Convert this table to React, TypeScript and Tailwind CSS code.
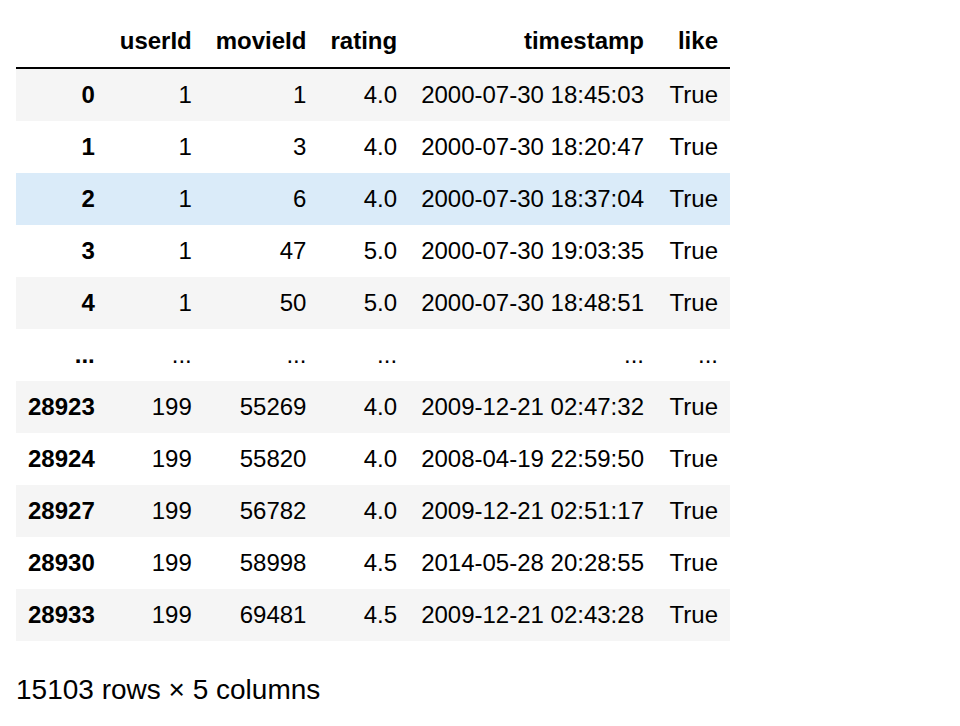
type Row = {
  idx: string;
  userId: string;
  movieId: string;
  rating: string;
  timestamp: string;
  like: string;
};

const rows: Row[] = [
  { idx: '0', userId: '1', movieId: '1', rating: '4.0', timestamp: '2000-07-30 18:45:03', like: 'True' },
  { idx: '1', userId: '1', movieId: '3', rating: '4.0', timestamp: '2000-07-30 18:20:47', like: 'True' },
  { idx: '2', userId: '1', movieId: '6', rating: '4.0', timestamp: '2000-07-30 18:37:04', like: 'True' },
  { idx: '3', userId: '1', movieId: '47', rating: '5.0', timestamp: '2000-07-30 19:03:35', like: 'True' },
  { idx: '4', userId: '1', movieId: '50', rating: '5.0', timestamp: '2000-07-30 18:48:51', like: 'True' },
  { idx: '...', userId: '...', movieId: '...', rating: '...', timestamp: '...', like: '...' },
  { idx: '28923', userId: '199', movieId: '55269', rating: '4.0', timestamp: '2009-12-21 02:47:32', like: 'True' },
  { idx: '28924', userId: '199', movieId: '55820', rating: '4.0', timestamp: '2008-04-19 22:59:50', like: 'True' },
  { idx: '28927', userId: '199', movieId: '56782', rating: '4.0', timestamp: '2009-12-21 02:51:17', like: 'True' },
  { idx: '28930', userId: '199', movieId: '58998', rating: '4.5', timestamp: '2014-05-28 20:28:55', like: 'True' },
  { idx: '28933', userId: '199', movieId: '69481', rating: '4.5', timestamp: '2009-12-21 02:43:28', like: 'True' },
];

const columns = ['userId', 'movieId', 'rating', 'timestamp', 'like'] as const;

export default function App() {
  return (
    <div className="min-h-screen bg-white pt-[15px] pl-4 text-black font-['Liberation_Sans',Arial,sans-serif]">
      <table className="border-collapse text-[24px] leading-[28px]">
        <thead>
          <tr className="border-b-2 border-black">
            <th className="px-3 py-3"></th>
            {columns.map((c) => (
              <th
                key={c}
                className={
                  c === 'userId'
                    ? 'w-[97px] px-3 py-3 text-right font-bold'
                    : c === 'like'
                      ? 'w-[74px] px-3 py-3 text-right font-bold'
                      : 'px-3 py-3 text-right font-bold'
                }
              >
                {c}
              </th>
            ))}
          </tr>
        </thead>
        <tbody>
          {rows.map((r, i) => {
            // row 2 is the one under the mouse
            const bg = i === 2 ? 'bg-[#daebf9]' : i % 2 === 0 ? 'bg-[#f5f5f5]' : 'bg-white';
            return (
              <tr key={r.idx + i} className={bg}>
                <th className="px-3 py-3 text-right font-bold">{r.idx}</th>
                {columns.map((c) => (
                  <td key={c} className="px-3 py-3 text-right">
                    {r[c]}
                  </td>
                ))}
              </tr>
            );
          })}
        </tbody>
      </table>
      <p className="mt-[33px] text-[28px] leading-[32px]">15103 rows × 5 columns</p>
    </div>
  );
}
